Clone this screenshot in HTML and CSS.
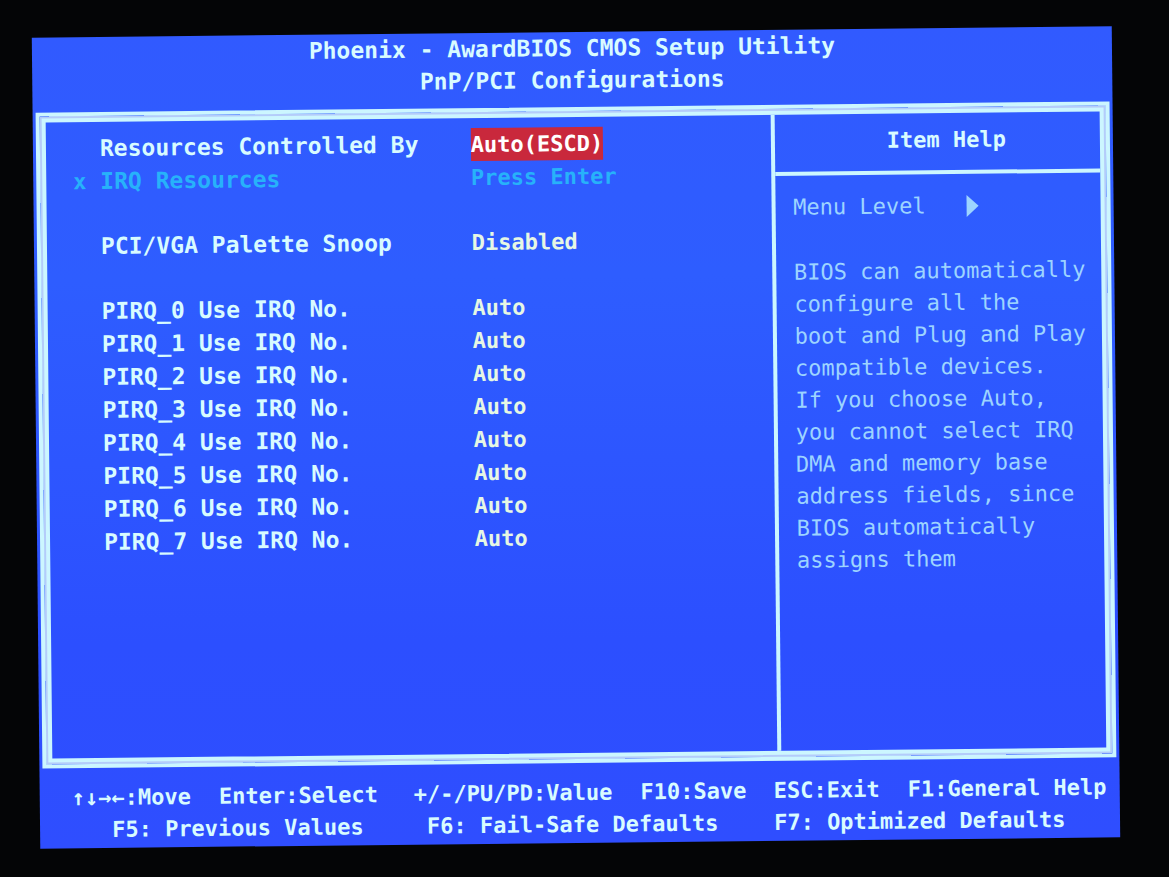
FILE: index.html
```html
<!DOCTYPE html>
<html lang="en">
<head>
    <meta charset="UTF-8">
    <meta name="viewport" content="width=device-width, initial-scale=1.0">
    <title>Phoenix - AwardBIOS CMOS Setup Utility</title>
    <link rel="stylesheet" href="styles.css">
</head>
<body>

    <div class="screen">
        <header class="title">
            <h1>Phoenix - AwardBIOS CMOS Setup Utility</h1>
            <h2>PnP/PCI Configurations</h2>
        </header>

        <main class="frame">
            <section class="settings">
                <table>
                    <tbody>
                        <tr>
                            <td class="mark"></td>
                            <th scope="row" id="resources">Resources Controlled By</th>
                            <td class="value"><button type="button" class="selected" aria-labelledby="resources">Auto(ESCD)</button></td>
                        </tr>
                        <tr class="locked">
                            <td class="mark">x</td>
                            <th scope="row" id="irq">IRQ Resources</th>
                            <td class="value"><button type="button" aria-labelledby="irq">Press Enter</button></td>
                        </tr>
                        <tr class="blank"><td colspan="3"></td></tr>
                        <tr>
                            <td class="mark"></td>
                            <th scope="row" id="snoop">PCI/VGA Palette Snoop</th>
                            <td class="value"><button type="button" aria-labelledby="snoop">Disabled</button></td>
                        </tr>
                        <tr class="blank"><td colspan="3"></td></tr>
                        <tr>
                            <td class="mark"></td>
                            <th scope="row" id="pirq0">PIRQ_0 Use IRQ No.</th>
                            <td class="value"><button type="button" aria-labelledby="pirq0">Auto</button></td>
                        </tr>
                        <tr>
                            <td class="mark"></td>
                            <th scope="row" id="pirq1">PIRQ_1 Use IRQ No.</th>
                            <td class="value"><button type="button" aria-labelledby="pirq1">Auto</button></td>
                        </tr>
                        <tr>
                            <td class="mark"></td>
                            <th scope="row" id="pirq2">PIRQ_2 Use IRQ No.</th>
                            <td class="value"><button type="button" aria-labelledby="pirq2">Auto</button></td>
                        </tr>
                        <tr>
                            <td class="mark"></td>
                            <th scope="row" id="pirq3">PIRQ_3 Use IRQ No.</th>
                            <td class="value"><button type="button" aria-labelledby="pirq3">Auto</button></td>
                        </tr>
                        <tr>
                            <td class="mark"></td>
                            <th scope="row" id="pirq4">PIRQ_4 Use IRQ No.</th>
                            <td class="value"><button type="button" aria-labelledby="pirq4">Auto</button></td>
                        </tr>
                        <tr>
                            <td class="mark"></td>
                            <th scope="row" id="pirq5">PIRQ_5 Use IRQ No.</th>
                            <td class="value"><button type="button" aria-labelledby="pirq5">Auto</button></td>
                        </tr>
                        <tr>
                            <td class="mark"></td>
                            <th scope="row" id="pirq6">PIRQ_6 Use IRQ No.</th>
                            <td class="value"><button type="button" aria-labelledby="pirq6">Auto</button></td>
                        </tr>
                        <tr>
                            <td class="mark"></td>
                            <th scope="row" id="pirq7">PIRQ_7 Use IRQ No.</th>
                            <td class="value"><button type="button" aria-labelledby="pirq7">Auto</button></td>
                        </tr>
                    </tbody>
                </table>
            </section>

            <aside class="help">
                <h3>Item Help</h3>
                <div class="help-body">
                    <div class="level">
                        <span>Menu Level</span>
                        <svg width="14" height="24" viewBox="0 0 14 24" aria-hidden="true">
                            <path d="M1 1L13 12L1 23Z" fill="currentColor"/>
                        </svg>
                    </div>
                    <p>
                        BIOS can automatically<br>
                        configure all the<br>
                        boot and Plug and Play<br>
                        compatible devices.<br>
                        If you choose Auto,<br>
                        you cannot select IRQ<br>
                        DMA and memory base<br>
                        address fields, since<br>
                        BIOS automatically<br>
                        assigns them
                    </p>
                </div>
            </aside>
        </main>

        <footer class="keys">
            <div class="group">
                <div class="line"><span>↑↓→←:Move</span><span>Enter:Select</span></div>
                <div class="line indent-3">F5: Previous Values</div>
            </div>
            <div class="group">
                <div class="line"><span>+/-/PU/PD:Value</span><span>F10:Save</span></div>
                <div class="line indent-1">F6: Fail-Safe Defaults</div>
            </div>
            <div class="group">
                <div class="line"><span>ESC:Exit</span><span>F1:General Help</span></div>
                <div class="line">F7: Optimized Defaults</div>
            </div>
        </footer>
    </div>

</body>
</html>
```
FILE: styles.css
```css
* {
    box-sizing: border-box;
}
body {
    margin: 0;
    padding: 32px 53px 34px 36px;
    min-height: 100vh;
    display: flex;
    background-color: #040506;
    color: #d8fbff;
    font-family: "DejaVu Sans Mono", "Liberation Mono", monospace;
    font-size: 22px;
    font-weight: bold;
    line-height: 33px;
    overflow: hidden;
}
h1, h2, h3, p {
    margin: 0;
    font-size: inherit;
}
/* The monitor sits slightly tilted */
.screen {
    flex: 1;
    display: flex;
    flex-direction: column;
    padding: 0 3px;
    background: linear-gradient(#315aff, #2e5dff 30%, #2c4fff 75%, #2f4eff);
    transform: rotate(-0.6deg);
}
.title {
    padding-bottom: 11px;
    text-align: center;
    font-size: 23px;
    line-height: 32px;
}
.frame {
    flex: 1;
    display: grid;
    grid-template-columns: 724fr 329fr;
    border: 4px solid #ccf6ff;
    box-shadow: inset 0 0 0 2px #b4ccfa, inset 0 0 0 6px #ccf6ff;
    padding: 6px;
}
.settings {
    padding: 10px 0 10px 27px;
}
table {
    width: 100%;
    table-layout: fixed;
    border-collapse: collapse;
}
th, td {
    height: 33px;
    padding: 0;
    text-align: left;
}
th {
    font-size: 23px;
}
.blank td {
    height: 32px;
}
.mark {
    width: 27px;
}
.value {
    width: 43%;
}
button {
    display: block;
    padding: 0;
    border: none;
    background: none;
    color: #e6f7e4;
    font: inherit;
    line-height: 33px;
    cursor: pointer;
}
.selected {
    background-color: #c9283c;
    color: #fff;
}
.locked, .locked button {
    color: #27b2fa;
}
.help {
    border-left: 4px solid #ccf6ff;
}
.help h3 {
    padding: 10px 0 14px 18px;
    border-bottom: 4px solid #ccf6ff;
    text-align: center;
}
.help-body {
    padding: 16px 0 16px 18px;
    color: #9dd4ff;
    font-weight: normal;
    line-height: 32px;
    white-space: nowrap;
}
.level {
    display: flex;
    align-items: center;
    gap: 40px;
    margin-bottom: 33px;
}
.keys {
    display: grid;
    grid-template-columns: 339fr 357fr 340fr;
    padding: 14px 0 2px 29px;
    line-height: 32px;
    white-space: nowrap;
}
.line {
    display: flex;
    gap: 28px;
}
.indent-1 {
    padding-left: 13px;
}
.indent-3 {
    padding-left: 40px;
}
```
